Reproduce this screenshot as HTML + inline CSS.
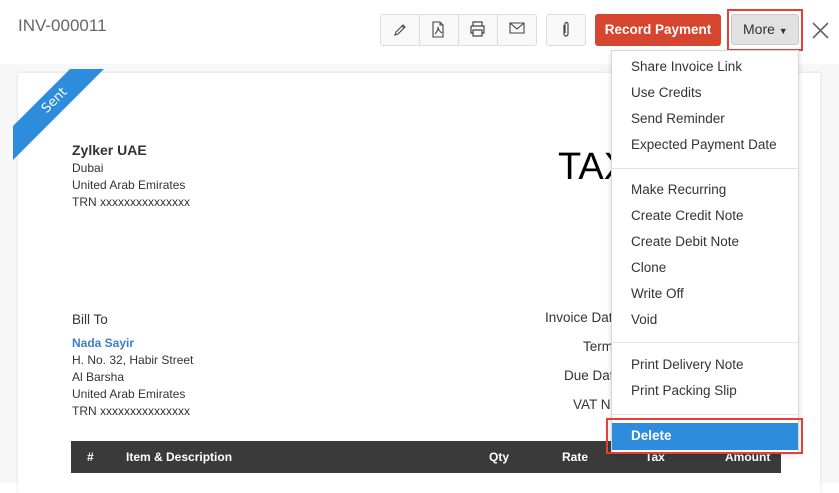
<!DOCTYPE html>
<html><head><style>
*{margin:0;padding:0;box-sizing:border-box}
body{width:839px;height:483px;overflow:hidden;background:#fff;font-family:"Liberation Sans",sans-serif;color:#333;position:relative}
.abs{position:absolute}
.band{left:0;top:64px;width:839px;height:419px;background:#f7f7f7}
.card{left:18px;top:73px;width:802px;height:420px;background:#fff;box-shadow:0 0 3px rgba(0,0,0,.12)}
.t{position:absolute;font-size:12px;white-space:nowrap}
.btn{position:absolute;top:14px;height:32px;border:1px solid #ddd;background:#f8f8f8;border-radius:3px}
.menu{left:611px;top:50px;width:188px;height:403px;background:#fff;border:1px solid #d6d6d6;box-shadow:0 2px 5px rgba(0,0,0,.15)}
.mi{position:absolute;left:19px;font-size:13.5px;color:#333}
.sep{position:absolute;left:0;width:186px;height:1px;background:#e2e2e2}
</style></head><body>
<div class="t" style="left:18px;top:16px;font-size:17px;color:#666">INV-000011</div>
<div class="btn" style="left:380px;width:157px"></div>
<div class="abs" style="left:419px;top:15px;width:1px;height:30px;background:#ddd"></div>
<div class="abs" style="left:458px;top:15px;width:1px;height:30px;background:#ddd"></div>
<div class="abs" style="left:497px;top:15px;width:1px;height:30px;background:#ddd"></div>
<svg class="abs" style="left:392px;top:22px" width="16" height="16" viewBox="0 0 16 16" fill="none" stroke="#444" stroke-width="1.1"><path d="M3 13l1-3 7-7 2 2-7 7z M10 4l2 2"/></svg>
<svg class="abs" style="left:431px;top:21px" width="14" height="17" viewBox="0 0 14 17" fill="none" stroke="#444" stroke-width="1.1"><path d="M2 1h7l3 3v12H2z M9 1v3h3 M4 13c2-2 3-5 3-7 0 2 2 5 4 6"/></svg>
<svg class="abs" style="left:469px;top:21px" width="17" height="16" viewBox="0 0 17 16" fill="none" stroke="#444" stroke-width="1.2"><path d="M4 5V1h9v4 M2 5h13v7h-2 M4 12H2V5 M4 9h9v6H4z"/></svg>
<svg class="abs" style="left:509px;top:22px" width="16" height="12" viewBox="0 0 16 12" fill="none" stroke="#444" stroke-width="1.1"><path d="M1 1h14v10H1z M1 1l7 6 7-6"/></svg>
<div class="btn" style="left:546px;width:40px"></div>
<svg class="abs" style="left:561px;top:21px" width="10" height="18" viewBox="0 0 10 18" fill="none" stroke="#444" stroke-width="1.2"><path d="M3 4v9a2 2 0 0 0 4 0V3a1.5 1.5 0 0 0-3 0v9"/></svg>
<div class="abs" style="left:595px;top:14px;width:126px;height:32px;background:#d6452f;border-radius:3px;color:#fff;font-size:13.5px;font-weight:bold;text-align:center;line-height:31px">Record Payment</div>
<div class="abs" style="left:727px;top:9px;width:76px;height:42px;border:2px solid #e2413a"></div>
<div class="abs" style="left:731px;top:14px;width:68px;height:31px;background:#e1e1e1;border:1px solid #c9c9c9;border-radius:3px;font-size:14px;line-height:29px;padding-left:11px;color:#333">More <span style="font-size:9px">▼</span></div>
<svg class="abs" style="left:812px;top:22px" width="17" height="17" viewBox="0 0 17 17" stroke="#666" stroke-width="1.6"><path d="M1 1l15 15M16 1L1 16"/></svg>

<div class="abs band"></div>
<div class="abs card"></div>
<div class="abs" style="left:13px;top:69px;width:95px;height:95px;overflow:hidden">
<div class="abs" style="left:-38px;top:20px;width:160px;height:24px;background:#2d8cdb;transform:rotate(-45deg);color:#fff;font-size:13px;text-align:center;line-height:24px;font-family:'DejaVu Sans',sans-serif">Sent</div>
</div>
<div class="t" style="left:72px;top:142px;font-weight:bold;font-size:14px">Zylker UAE</div>
<div class="t" style="left:72px;top:161px">Dubai</div>
<div class="t" style="left:72px;top:178px">United Arab Emirates</div>
<div class="t" style="left:72px;top:195px">TRN xxxxxxxxxxxxxxx</div>
<div class="t" style="left:558px;top:146px;font-size:38px;color:#000">TAX</div>
<div class="t" style="left:72px;top:312px;font-size:13.5px">Bill To</div>
<div class="t" style="left:72px;top:336px;color:#3d7fc4;font-weight:bold">Nada Sayir</div>
<div class="t" style="left:72px;top:353px">H. No. 32, Habir Street</div>
<div class="t" style="left:72px;top:370px">Al Barsha</div>
<div class="t" style="left:72px;top:387px">United Arab Emirates</div>
<div class="t" style="left:72px;top:404px">TRN xxxxxxxxxxxxxxx</div>
<div class="t" style="left:545px;top:310px;font-size:13.5px">Invoice Date</div>
<div class="t" style="left:583px;top:339px;font-size:13.5px">Terms</div>
<div class="t" style="left:564px;top:368px;font-size:13.5px">Due Date</div>
<div class="t" style="left:573px;top:397px;font-size:13.5px">VAT No</div>
<div class="abs" style="left:71px;top:441px;width:710px;height:32px;background:#3a3a3a;color:#fff;font-size:12.5px;font-weight:bold">
<span class="t" style="left:16px;top:9px">#</span>
<span class="t" style="left:55px;top:9px">Item &amp; Description</span>
<span class="t" style="left:418px;top:9px">Qty</span>
<span class="t" style="left:491px;top:9px">Rate</span>
<span class="t" style="left:574px;top:9px">Tax</span>
<span class="t" style="left:654px;top:9px">Amount</span>
</div>

<div class="abs menu">
<div class="mi" style="top:8px">Share Invoice Link</div>
<div class="mi" style="top:34px">Use Credits</div>
<div class="mi" style="top:60px">Send Reminder</div>
<div class="mi" style="top:86px">Expected Payment Date</div>
<div class="sep" style="top:117px"></div>
<div class="mi" style="top:131px">Make Recurring</div>
<div class="mi" style="top:157px">Create Credit Note</div>
<div class="mi" style="top:183px">Create Debit Note</div>
<div class="mi" style="top:209px">Clone</div>
<div class="mi" style="top:235px">Write Off</div>
<div class="mi" style="top:261px">Void</div>
<div class="sep" style="top:291px"></div>
<div class="mi" style="top:306px">Print Delivery Note</div>
<div class="mi" style="top:332px">Print Packing Slip</div>
<div class="sep" style="top:363px"></div>
<div class="abs" style="left:0;top:372px;width:186px;height:27px;background:#2d8cdb"></div>
<div class="mi" style="top:377px;color:#fff;font-weight:bold">Delete</div>
</div>
<div class="abs" style="left:606px;top:418px;width:197px;height:36px;border:2px solid #e2413a"></div>
</body></html>
